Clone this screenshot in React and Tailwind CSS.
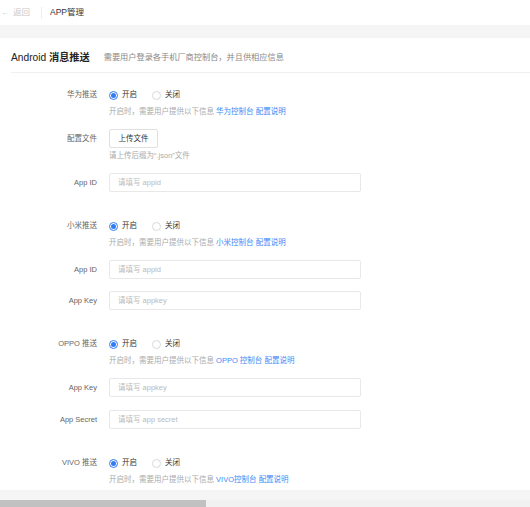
import React from "react";

const font = { fontFamily: '"Liberation Sans", "Noto Sans CJK SC", sans-serif' };

function Radio({ checked, label }) {
  return (
    <label className="flex items-center mr-[15px]">
      <span
        className={
          checked
            ? "w-[9px] h-[9px] rounded-full border border-[#2f7cf6] flex items-center justify-center"
            : "w-[9px] h-[9px] rounded-full border border-[#d9d9d9]"
        }
      >
        {checked && <span className="w-[5px] h-[5px] rounded-full bg-[#2f7cf6]" />}
      </span>
      <span className="ml-[4px] text-[7.5px] text-[#333]">{label}</span>
    </label>
  );
}

function Label({ children }) {
  return (
    <div className="w-[97px] shrink-0 text-right text-[7.5px] text-[#666]">
      {children}
    </div>
  );
}

function SwitchRow({ name, console, className }) {
  return (
    <div className={className}>
      <div className="flex items-center h-[20px]">
        <Label>{name}</Label>
        <div className="ml-[12px] flex items-center">
          <Radio checked label="开启" />
          <Radio label="关闭" />
        </div>
      </div>
      <div className="mt-[1px] ml-[109px] h-[12px] leading-[12px] text-[7.5px] text-[#aaa] whitespace-nowrap">
        开启时，需要用户提供以下信息{" "}
        <span className="text-[#3d8af7]">{console}</span>{" "}
        <span className="text-[#3d8af7]">配置说明</span>
      </div>
    </div>
  );
}

function InputRow({ name, placeholder, className }) {
  return (
    <div className={"flex items-center " + className}>
      <Label>{name}</Label>
      <input
        readOnly
        placeholder={placeholder}
        className="ml-[12px] w-[252px] h-[19px] border border-[#e8e8e8] rounded-[2px] pl-[8px] text-[7.5px] outline-none placeholder:text-[#bbb]"
        style={font}
      />
    </div>
  );
}

export default function App() {
  return (
    <div className="w-[530px] h-[507px] overflow-hidden flex flex-col bg-[#f5f5f5]" style={font}>
      <div className="h-[25px] shrink-0 bg-white flex items-center">
        <span className="ml-[1px] text-[8px] text-[#c8c8c8]">←</span>
        <span className="ml-[4px] text-[8.5px] text-[#c8c8c8]">返回</span>
        <span className="ml-[11px] w-px h-[12px] bg-[#eee]" />
        <span className="ml-[8px] text-[8.5px] text-[#333]">APP管理</span>
      </div>
      <div className="h-[13px] shrink-0" />
      <div className="bg-white shrink-0 pb-[4px]">
        <div className="ml-[11px] pt-[13px] pb-[7px] border-b border-[#f0f0f0] flex items-center h-[35px] box-border">
          <span className="text-[10.2px] text-[#222]">
            Android <span className="font-semibold">消息推送</span>
          </span>
          <span className="ml-[14px] text-[8.2px] text-[#888]">
            需要用户登录各手机厂商控制台，并且供相应信息
          </span>
        </div>

        <SwitchRow className="mt-[12px]" name="华为推送" console="华为控制台" />
        <div className="mt-[11px] flex items-center">
          <Label>配置文件</Label>
          <button className="ml-[12px] w-[49px] h-[19px] border border-[#e0e0e0] rounded-[2px] bg-white text-[7.5px] text-[#333]">
            上传文件
          </button>
        </div>
        <div className="mt-[2px] ml-[109px] h-[12px] leading-[12px] text-[7.5px] text-[#aaa]">
          请上传后缀为“.json”文件
        </div>
        <InputRow className="mt-[11px]" name="App ID" placeholder="请填写 appid" />

        <SwitchRow className="mt-[24px]" name="小米推送" console="小米控制台" />
        <InputRow className="mt-[11px]" name="App ID" placeholder="请填写 appid" />
        <InputRow className="mt-[12px]" name="App Key" placeholder="请填写 appkey" />

        <SwitchRow className="mt-[24px]" name="OPPO 推送" console="OPPO 控制台" />
        <InputRow className="mt-[11px]" name="App Key" placeholder="请填写 appkey" />
        <InputRow className="mt-[13px]" name="App Secret" placeholder="请填写 app secret" />

        <SwitchRow className="mt-[24px]" name="VIVO 推送" console="VIVO控制台" />
      </div>
      <div className="flex-1" />
      <div className="h-[7px] shrink-0 bg-[#f1f1f1] flex">
        <div className="w-[206px] h-full bg-[#c1c1c1]" />
      </div>
    </div>
  );
}
